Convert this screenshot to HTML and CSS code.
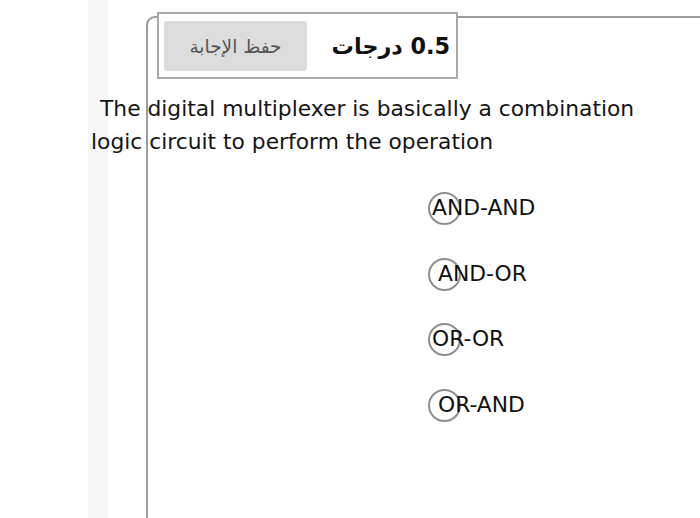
FILE: index.html
```html
<!DOCTYPE html>
<html lang="en">
<head>
<meta charset="utf-8">
<title>Question</title>
<link rel="stylesheet" href="styles.css">
</head>
<body>
<div class="panel">
  <div class="qhead">
    <div class="grade">0.5 درجات</div>
    <button class="save">حفظ الإجابة</button>
  </div>
  <p class="question">The digital multiplexer is basically a combination logic circuit to perform the operation</p>
  <div class="options">
    <label class="opt"><span class="radio"></span><span class="txt">AND-AND</span></label>
    <label class="opt"><span class="radio"></span><span class="txt shift">AND-OR</span></label>
    <label class="opt"><span class="radio"></span><span class="txt">OR-OR</span></label>
    <label class="opt"><span class="radio"></span><span class="txt shift">OR-AND</span></label>
  </div>
</div>
</body>
</html>
```

FILE: styles.css
```css
html, body {
  margin: 0;
  padding: 0;
  height: 100%;
  overflow: hidden;
}
body {
  background: linear-gradient(to right, #fff 0, #fff 88px, #f7f7f7 88px, #f7f7f7 108px, #fff 108px);
  font-family: "DejaVu Sans", Verdana, sans-serif;
  color: #151515;
}
.panel {
  margin: 16px 0 0 146px;
  min-height: 502px;
  box-sizing: border-box;
  border-left: 2px solid #9c9c9c;
  border-top: 2px solid #9c9c9c;
  border-top-left-radius: 9px;
}
.qhead {
  direction: rtl;
  display: flex;
  align-items: center;
  width: 301px;
  box-sizing: border-box;
  margin: -6px 0 0 9px;
  padding: 7px 6px 6px 5px;
  background: #fff;
  border: 2px solid #a9a9a9;
}
.grade {
  font-weight: bold;
  font-size: 22.3px;
  color: #111;
  flex: 1;
  text-align: right;
}
.save {
  width: 143px;
  height: 50px;
  border: none;
  border-radius: 3px;
  background: #dcdcdc;
  color: #555;
  font-family: "DejaVu Sans", sans-serif;
  font-size: 18.5px;
  padding: 0;
  direction: rtl;
}
.question {
  margin: 13px 0 0 -57px;
  width: 575px;
  font-size: 21.8px;
  line-height: 33px;
  text-indent: 9px;
  color: #151515;
}
.options {
  margin: 33px 0 0 280px;
  display: flex;
  flex-direction: column;
  gap: 32.7px;
}
.opt {
  position: relative;
  display: block;
  font-size: 21.8px;
  line-height: 33px;
  color: #111;
}
.radio {
  position: absolute;
  left: 0;
  top: 1px;
  width: 33px;
  height: 33px;
  box-sizing: border-box;
  border: 2px solid #8f8f8f;
  border-radius: 50%;
}
.txt {
  position: relative;
  padding-left: 4px;
}
.txt.shift {
  padding-left: 10px;
}
```
